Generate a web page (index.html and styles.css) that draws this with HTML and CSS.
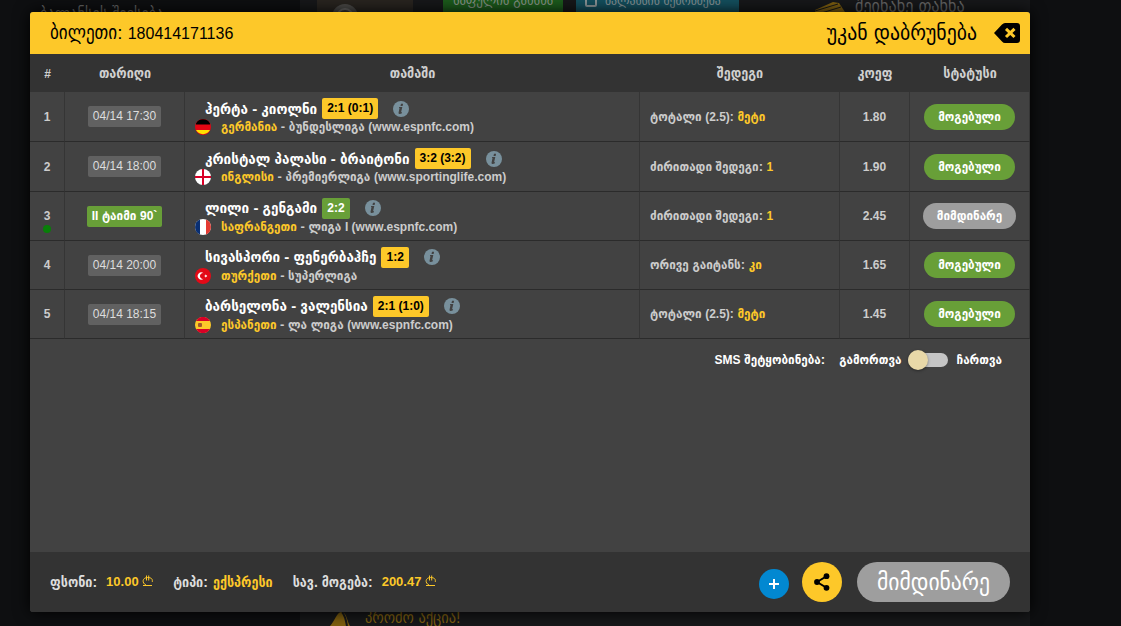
FILE: index.html
```html
<!DOCTYPE html>
<html lang="ka">
<head>
<meta charset="utf-8">
<title>ბილეთი</title>
<link rel="stylesheet" href="styles.css">
</head>
<body>
<svg class="defs" aria-hidden="true">
  <symbol id="info" viewBox="0 0 16 16"><circle cx="8" cy="8" r="8" fill="#78909c"/><path d="M8 2.800h2.100l-.5 2.200H7.500zM6.200 6h3.100l-1.200 5.300h1l-.2.9c-.8.6-1.800.9-2.500.8-.8-.1-1-.7-.8-1.500l.9-4.400h-.6z" fill="#424242"/></symbol>
</svg>
<div class="page" aria-hidden="true">
  <div class="page-top">
    <div class="page-side"><span class="page-about">ბალანსის შევსება</span></div>
    <div class="page-main">
      <span class="thumb"><svg width="28" height="28" viewBox="0 0 28 28"><circle cx="14" cy="14" r="13" fill="#4b4a48"/><circle cx="14" cy="14" r="8" fill="#383735" stroke="#6a6967" stroke-width="2"/></svg></span>
      <span class="page-button green">საფულის გახსნა</span>
      <span class="page-button blue"><svg width="12" height="14" viewBox="0 0 12 14"><rect x="1" y="0" width="10" height="13" rx="1" fill="none" stroke="#8a9598" stroke-width="2"/></svg>ბალანსის შემოწმება</span>
      <span class="page-save"><svg width="34" height="20" viewBox="0 0 34 20"><path d="M2 10 L20 2 L26 3 L32 12 L34 18 H2z" fill="#806010"/><path d="M2 11 L25 4 M2 15 L28 7" stroke="#17181a" stroke-width="1"/></svg>შეინახე თანხა</span>
    </div>
  </div>
  <div class="page-bottom"><svg width="26" height="18" viewBox="0 0 26 18"><path d="M1 17C6 12 8 2 13 3s5 10 8 14" fill="#806010"/><path d="M13 3c3 3 4 8 5 14" stroke="#17181a" fill="none" stroke-width="2"/></svg><span>პრომო აქცია!</span></div>
</div>
<main class="stage">
<section class="ticket" aria-label="ბილეთი">
  <header class="ticket-head">
    <h1>ბილეთი: <span class="ticket-id">180414171136</span></h1>
    <button class="back" type="button">უკან დაბრუნება
      <svg width="28" height="20" viewBox="0 0 28 20"><path d="M1 10 9 1.500Q10.400 0 12 0H24Q27 0 27 3V17Q27 20 24 20H12Q10.400 20 9 18.500z" fill="#000"/><path d="M13 5.800 21.500 14M21.500 5.800 13 14" stroke="#fdc829" stroke-width="3"/></svg>
    </button>
  </header>
  <div class="ticket-body">
    <table class="bets">
      <colgroup><col class="c-num"><col class="c-date"><col><col class="c-result"><col class="c-odd"><col class="c-status"></colgroup>
      <thead><tr><th><span class="src">#</span></th><th>თარიღი</th><th>თამაში</th><th>შედეგი</th><th>კოეფ</th><th>სტატუსი</th></tr></thead>
      <tbody>
        <tr class="tall"><td class="num">1</td><td class="date"><span class="time">04/14 17:30</span></td>
          <td class="game"><div class="match"><b>ჰერტა - კიოლნი</b><span class="score">2:1 (0:1)</span><svg class="info"><use href="#info"/></svg></div>
            <div class="league"><svg class="flag" viewBox="0 0 16 16"><circle cx="8" cy="8" r="8" fill="#e30613"/><path d="M1 4.500a8 8 0 0 1 14 0v1H1z" fill="#000"/><path d="M1 11a8 8 0 0 0 14 0z" fill="#ffe000"/></svg><span><em>გერმანია</em> - ბუნდესლიგა <span class="src">(www.espnfc.com)</span></span></div></td>
          <td class="result">ტოტალი <span class="src">(2.5):</span> <em>მეტი</em></td><td class="odd">1.80</td><td class="state"><span class="pill won">მოგებული</span></td></tr>
        <tr class="tall"><td class="num">2</td><td class="date"><span class="time">04/14 18:00</span></td>
          <td class="game"><div class="match"><b>კრისტალ პალასი - ბრაიტონი</b><span class="score">3:2 (3:2)</span><svg class="info"><use href="#info"/></svg></div>
            <div class="league"><svg class="flag" viewBox="0 0 16 16"><circle cx="8" cy="8" r="8" fill="#fff"/><path d="M8 0v16M0 8h16" stroke="#d80027" stroke-width="2"/></svg><span><em>ინგლისი</em> - პრემიერლიგა <span class="src">(www.sportinglife.com)</span></span></div></td>
          <td class="result">ძირითადი შედეგი: <em class="src">1</em></td><td class="odd">1.90</td><td class="state"><span class="pill won">მოგებული</span></td></tr>
        <tr><td class="num">3<i class="live-dot"></i></td><td class="date"><span class="time live"><span class="src">II</span> ტაიმი <span class="src">90`</span></span></td>
          <td class="game"><div class="match"><b>ლილი - გენგამი</b><span class="score live">2:2</span><svg class="info"><use href="#info"/></svg></div>
            <div class="league"><svg class="flag" viewBox="0 0 16 16"><circle cx="8" cy="8" r="8" fill="#fff"/><path d="M5 .6v14.800A8 8 0 0 1 5 .6z" fill="#0a2f72"/><path d="M11 .6v14.800A8 8 0 0 0 11 .6z" fill="#e33a32"/></svg><span><em>საფრანგეთი</em> - ლიგა <span class="src">I (www.espnfc.com)</span></span></div></td>
          <td class="result">ძირითადი შედეგი: <em class="src">1</em></td><td class="odd">2.45</td><td class="state"><span class="pill">მიმდინარე</span></td></tr>
        <tr><td class="num">4</td><td class="date"><span class="time">04/14 20:00</span></td>
          <td class="game"><div class="match"><b>სივასპორი - ფენერბაჰჩე</b><span class="score">1:2</span><svg class="info"><use href="#info"/></svg></div>
            <div class="league"><svg class="flag" viewBox="0 0 16 16"><circle cx="8" cy="8" r="8" fill="#e30a17"/><path d="M8.600 5.200a3.600 3.600 0 1 0 0 5.600 2.900 2.900 0 1 1 0-5.600z" fill="#fff"/><path d="M9 8l1.200-.5V6.300l.8 1 1.200-.4L11.500 8l.7 1-1.200-.3-.8 1V8.500z" fill="#fff"/></svg><span><em>თურქეთი</em> - სუპერლიგა</span></div></td>
          <td class="result">ორივე გაიტანს: <em>კი</em></td><td class="odd">1.65</td><td class="state"><span class="pill won">მოგებული</span></td></tr>
        <tr><td class="num">5</td><td class="date"><span class="time">04/14 18:15</span></td>
          <td class="game"><div class="match"><b>ბარსელონა - ვალენსია</b><span class="score">2:1 (1:0)</span><svg class="info"><use href="#info"/></svg></div>
            <div class="league"><svg class="flag" viewBox="0 0 16 16"><circle cx="8" cy="8" r="8" fill="#fdc829"/><path d="M1 4a8 8 0 0 1 14 0zM1 12a8 8 0 0 0 14 0z" fill="#d80027"/><rect x="3" y="6" width="4" height="4" rx="1" fill="#a3562a"/></svg><span><em>ესპანეთი</em> - ლა ლიგა <span class="src">(www.espnfc.com)</span></span></div></td>
          <td class="result">ტოტალი <span class="src">(2.5):</span> <em>მეტი</em></td><td class="odd">1.45</td><td class="state"><span class="pill won">მოგებული</span></td></tr>
      </tbody>
    </table>
    <div class="sms"><label class="sms-title" for="sms"><span class="src">SMS</span> შეტყობინება:</label><span>გამორთვა</span><input id="sms" class="switch" type="checkbox"><span>ჩართვა</span></div>
  </div>
  <footer class="ticket-foot">
    <dl class="totals">
      <div class="wide"><dt>ფსონი:</dt><dd>10.00 <svg class="lari" viewBox="0 0 11 11"><path d="M1 10.500H10M4 10C-.5 8 .5 2.500 5.500 2.500S10.500 5 10.300 7M4.500.5v5M6.700.5v5" fill="none" stroke="currentColor"/></svg></dd></div>
      <div><dt>ტიპი:</dt><dd class="kind">ექსპრესი</dd></div>
      <div class="wide"><dt>სავ. მოგება:</dt><dd>200.47 <svg class="lari" viewBox="0 0 11 11"><path d="M1 10.500H10M4 10C-.5 8 .5 2.500 5.500 2.500S10.500 5 10.300 7M4.500.5v5M6.700.5v5" fill="none" stroke="currentColor"/></svg></dd></div>
    </dl>
    <button class="round add" type="button" aria-label="დამატება"><svg width="12" height="12" viewBox="0 0 12 12"><path d="M6 1v10M1 6h10" stroke="#fff" stroke-width="2"/></svg></button>
    <button class="round share" type="button" aria-label="გაზიარება"><svg width="16" height="18" viewBox="0 0 16 18"><path d="M13 3 3 9l10 6" fill="none" stroke="#000" stroke-width="2"/><circle cx="12.500" cy="3.200" r="2.900"/><circle cx="3" cy="9" r="2.900"/><circle cx="12.500" cy="14.800" r="2.900"/></svg></button>
    <button class="current" type="button">მიმდინარე</button>
  </footer>
</section>
</main>
</body>
</html>
```

FILE: styles.css
```css
* { box-sizing: border-box; }
body {
  margin: 0;
  height: 100vh;
  overflow: hidden;
  position: relative;
  background: #0e0f11;
  font-family: "Liberation Sans", "DejaVu Sans Condensed", "DejaVu Sans", sans-serif;
  font-size: 12px;
  line-height: 16px;
  color: #fff;
}
button { border: 0; padding: 0; font: inherit; cursor: pointer; }
em { font-style: normal; color: #fdc829; }
.defs { position: absolute; width: 0; height: 0; }

/* dimmed page behind the ticket */
.page { position: absolute; inset: 0; display: flex; flex-direction: column; justify-content: space-between; overflow: hidden; color: #666; }
.page-top { display: flex; height: 40px; }
.page-side { width: 300px; padding: 6px 0 0 40px; font-size: 16px; }
.page-main { display: flex; width: 730px; background: #17181a; }
.thumb { width: 96px; height: 14px; margin-left: 17px; padding: 3px 0 0 14px; background: #292520; }
.page-button { width: 120px; height: 12px; margin-left: 30px; line-height: 1px; background: #1c5c1c; color: #8a958a; font-size: 14px; text-align: center; white-space: nowrap; }
.page-button.blue { display: flex; gap: 8px; width: 163px; margin-left: 13px; padding-left: 9px; background: #14505f; color: #8a9598; font-size: 13px; }
.page-button.blue svg { flex: none; margin-top: -7px; }
.page-save { display: flex; gap: 8px; margin-left: 74px; font-size: 18px; line-height: 12px; white-space: nowrap; }
.page-bottom { display: flex; gap: 10px; width: 730px; height: 17px; margin-left: 300px; padding-left: 29px; background: #17181a; color: #806010; font-size: 16px; line-height: 17px; }

.stage { position: absolute; inset: 0; display: flex; padding: 12px 91px 14px 30px; }
.ticket { flex: 1; display: flex; flex-direction: column; overflow: hidden; border-radius: 3px; background: #424242; box-shadow: 0 0 16px #000; }
.ticket-head { display: flex; justify-content: space-between; align-items: center; height: 42px; padding: 0 9px 0 20px; background: #fdc829; color: #000; }
.ticket-head h1 { margin: 0; font-size: 19px; line-height: 20px; font-weight: 400; }
.ticket-id { font-size: 16px; }
.back { display: flex; align-items: center; gap: 16px; background: none; color: #000; font-size: 22px; line-height: 20px; }
.ticket-body { flex: 1; }

.bets { width: 100%; table-layout: fixed; border-collapse: separate; border-spacing: 0; }
.c-num { width: 35px; }
.c-date, .c-status { width: 120px; }
.c-result { width: 200px; }
.c-odd { width: 70px; }
.bets th { height: 38px; padding: 0; background: #333; color: #d0d0d0; font-size: 14px; }
.bets td { height: 49px; padding: 0; border-right: 1px solid #353535; border-bottom: 1px solid #2b2b2b; color: #ccc; font-weight: 700; text-align: center; white-space: nowrap; }
.bets .tall td { height: 50px; }
.live-dot { display: block; width: 8px; height: 8px; margin: 1px auto -9px; border-radius: 50%; background: #087f08; }
.time { display: inline-block; height: 21px; padding: 0 5px; border-radius: 2px; background: #616161; color: #ddd; font-weight: 400; line-height: 20px; vertical-align: middle; }
.time.live { background: #689f38; color: #fff; font-weight: 700; font-size: 13px; }
.bets .game, .bets .result { text-align: left; }
.bets .game { padding-left: 10px; }
.bets .result { padding-left: 10px; font-size: 13px; }
.match { display: flex; align-items: center; height: 21px; padding-left: 10px; color: #fff; font-size: 15px; }
.score { height: 21px; margin-left: 5px; padding: 0 5px; border-radius: 2px; background: #fdc829; color: #000; font-size: 12px; line-height: 21px; }
.score.live { background: #689f38; color: #fff; }
.info { width: 16px; height: 16px; margin-left: 15px; }
.league { display: flex; align-items: center; gap: 10px; height: 16px; font-size: 13px; }
.flag { width: 16px; height: 16px; }
.bets .src, .sms .src { font-size: 12px; }
.pill { display: inline-block; height: 26px; padding: 0 14px; border-radius: 13px; background: #9e9e9e; color: #fff; font-size: 13px; line-height: 26px; vertical-align: middle; }
.pill.won { background: #689f38; }

.sms { display: flex; justify-content: flex-end; align-items: center; height: 42px; padding-right: 28px; font-size: 13px; font-weight: 700; }
.sms-title { margin-right: 14px; }
.switch { appearance: none; display: flex; align-items: center; width: 40px; height: 14px; margin: 0 8px 0 7px; border-radius: 7px; background: #c5c5c5; cursor: pointer; }
.switch::before { content: ""; width: 20px; height: 20px; border-radius: 50%; background: #e8d8a8; box-shadow: 0 1px 3px rgba(0, 0, 0, .4); }
.switch:checked { justify-content: flex-end; }

.ticket-foot { display: flex; align-items: center; height: 60px; padding: 0 20px; background: #333; }
.totals { display: flex; flex: 1; gap: 20px; margin: 0; font-weight: 700; white-space: nowrap; }
.totals div { display: flex; align-items: center; gap: 5px; }
.totals .wide { gap: 9px; }
.totals dt { color: #ddd; font-size: 14px; }
.totals dd { margin: 0; color: #fdc829; font-size: 13px; }
.totals .kind { font-size: 14px; }
.lari { width: 11px; height: 11px; }
.round { display: flex; align-items: center; justify-content: center; border-radius: 50%; }
.add { width: 30px; height: 30px; margin: 4px 13px 0 0; background: #0288d1; }
.share { width: 40px; height: 40px; margin-right: 15px; background: #fdc829; }
.current { height: 40px; padding: 0 20px; border-radius: 20px; background: #9e9e9e; color: #fff; font-size: 24px; }
```
